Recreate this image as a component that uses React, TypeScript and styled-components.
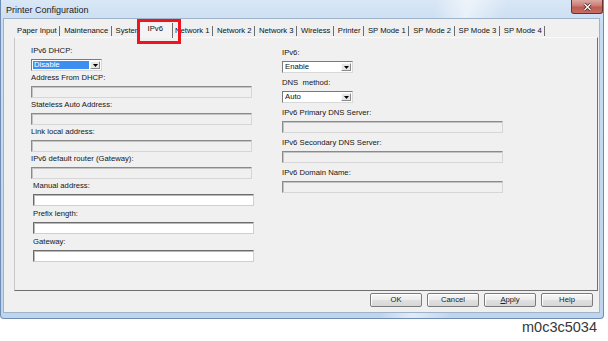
import * as React from 'react';
import styled, { createGlobalStyle } from 'styled-components'

const GlobalStyle = createGlobalStyle`
  html, body {
    margin: 0;
    padding: 0;
    background: #fff;
  }
  body {
    font-family: "Liberation Sans", Arial, sans-serif;
    color: #111;
  }
`

const Page = styled.div`
  width: 608px;
  height: 341px;
  display: flex;
  flex-direction: column;
  overflow: hidden;
`

const Window = styled.div`
  width: 604px;
  height: 319px;
  box-sizing: border-box;
  display: flex;
  flex-direction: column;
  padding: 0 3px 5px 2px;
  border: 1px solid #6f8db3;
  border-top: none;
  border-radius: 0 0 4px 4px;
  background:
    linear-gradient(100deg, rgba(255,255,255,0) 66%, rgba(255,255,255,0.55) 71%, rgba(255,255,255,0) 77%),
    linear-gradient(180deg, #d9e7f6 0%, #c8dcf1 8%, #bfd5ed 100%);
`

const TitleBar = styled.div`
  height: 18px;
  flex: none;
  display: flex;
  align-items: flex-start;
  justify-content: space-between;
  margin-right: -3px;
`

const TitleText = styled.span`
  font-size: 9px;
  line-height: 10px;
  padding: 5px 0 0 3px;
  color: #1b1b1b;
`

const CloseButton = styled.div`
  width: 32px;
  height: 14px;
  box-sizing: border-box;
  display: flex;
  align-items: center;
  justify-content: center;
  border: 1px solid #6b3029;
  border-top: none;
  border-radius: 0 0 3px 3px;
  background: linear-gradient(180deg, #dba9a3 0%, #cc7a71 45%, #bd5c53 55%, #c66d63 100%);
`

const Client = styled.div`
  flex: 1;
  display: flex;
  flex-direction: column;
  background: #f0f0f0;
  border: 1px solid #9fb3ca;
  padding: 0 1px 0 10px;
`

const TabStrip = styled.div`
  height: 18px;
  flex: none;
  display: flex;
  align-items: flex-end;
  margin-left: -1px;
  position: relative;
  z-index: 1;
`

const Tab = styled.div<{ $active?: boolean }>`
  position: relative;
  box-sizing: border-box;
  font-size: 7.7px;
  line-height: 10px;
  white-space: nowrap;
  color: #111;
  border-right: 1px solid #6e6e6e;
  height: ${p => (p.$active ? '15px' : '10px')};
  padding: ${p => (p.$active ? '1px 9px 0 8px' : '0 2.4px 0 4px')};
  margin: ${p => (p.$active ? '0 -2px -1px -5px' : '0 0 1px 0')};
  z-index: ${p => (p.$active ? 1 : 0)};
  background: ${p => (p.$active ? '#f4f4f4' : 'transparent')};
`

const Highlight = styled.div`
  position: absolute;
  left: -3px;
  top: -4px;
  width: 44px;
  height: 25px;
  box-sizing: border-box;
  border: 3px solid #f0141e;
  pointer-events: none;
`

const Panel = styled.div`
  flex: 1;
  display: grid;
  grid-template-columns: 251px 1fr;
  align-items: start;
  padding: 8px 0 0 16px;
  border: 1px solid;
  border-color: #fafafa #6f6f6f #6f6f6f #c8c8c8;
`

const Column = styled.div<{ $top: number; $gap: number }>`
  display: flex;
  flex-direction: column;
  gap: ${p => p.$gap}px;
  padding-top: ${p => p.$top}px;
`

const LowerGroup = styled.div`
  display: flex;
  flex-direction: column;
  gap: 3px;
  padding-left: 2px;
`

const Field = styled.div`
  display: flex;
  flex-direction: column;
  gap: 3px;
`

const FieldLabel = styled.span`
  font-size: 7.7px;
  line-height: 10px;
  height: 10px;
  white-space: pre;
  color: #151515;
`

const TextBox = styled.div<{ $disabled?: boolean }>`
  width: 221px;
  height: 12px;
  box-sizing: border-box;
  border: 1px solid;
  border-color: ${p => (p.$disabled ? '#8a8a8a #d6d6d6 #d6d6d6 #8a8a8a' : '#6d6d6d #cfcfcf #cfcfcf #6d6d6d')};
  box-shadow: inset 1px 1px 0 ${p => (p.$disabled ? '#c4c4c4' : '#b9b9b9')};
  background: ${p => (p.$disabled ? '#f0f0f0' : '#ffffff')};
`

const Combo = styled.div`
  width: 71px;
  height: 12px;
  box-sizing: border-box;
  display: flex;
  border: 1px solid;
  border-color: #7a7a7a #d8d8d8 #d8d8d8 #7a7a7a;
  background: #fff;
  padding: 1px;
`

const ComboValue = styled.span<{ $focused?: boolean }>`
  flex: 1;
  font-size: 7.7px;
  line-height: 8px;
  padding-left: 1px;
  background: ${p => (p.$focused ? '#3c8ff0' : 'transparent')};
  color: ${p => (p.$focused ? '#fff' : '#111')};
`

const ComboArrow = styled.span`
  width: 10px;
  flex: none;
  margin-left: 1px;
  display: flex;
  align-items: center;
  justify-content: center;
  box-sizing: border-box;
  border: 1px solid;
  border-color: #fafafa #8a8a8a #8a8a8a #fafafa;
  background: #e6e6e6;
`

const ButtonRow = styled.div`
  flex: none;
  display: flex;
  justify-content: flex-end;
  gap: 5px;
  margin: 2px 0 5px;
  padding-right: 5px;
`

const DialogButton = styled.button`
  width: 52px;
  height: 14px;
  padding: 0;
  box-sizing: border-box;
  font-family: "Liberation Sans", Arial, sans-serif;
  font-size: 7.7px;
  line-height: 10px;
  color: #222;
  border: 1px solid #7b7b7b;
  border-radius: 2px;
  background: linear-gradient(180deg, #f7f7f7 0%, #ececec 48%, #e0e0e0 52%, #d6d6d6 100%);
  box-shadow: inset 1px 1px 0 #ffffff;
`

const Caption = styled.div`
  width: 597px;
  text-align: right;
  font-family: "Liberation Sans", Arial, sans-serif;
  font-size: 14.5px;
  line-height: 16px;
  margin-top: 0px;
  color: #383838;
`

const tabs = [
  'Paper Input', 'Maintenance', 'System', 'IPv6', 'Network 1', 'Network 2', 'Network 3',
  'Wireless', 'Printer', 'SP Mode 1', 'SP Mode 2', 'SP Mode 3', 'SP Mode 4',
]

const Arrow = () => (
  <svg width="5" height="3" viewBox="0 0 5 3">
    <polygon points="0,0 5,0 2.5,3" fill="#000" />
  </svg>
)

const ComboBox = ({ value, focused }: { value: string; focused?: boolean }) => (
  <Combo>
    <ComboValue $focused={focused}>{value}</ComboValue>
    <ComboArrow><Arrow /></ComboArrow>
  </Combo>
)

interface FieldProps {
  label: string;
  select?: string;
  focused?: boolean;
  disabled?: boolean;
}

const FormField = (props: FieldProps) => (
  <Field>
    <FieldLabel>{props.label}</FieldLabel>
    {props.select ? <ComboBox value={props.select} focused={props.focused} /> : <TextBox $disabled={props.disabled} />}
  </Field>
)

const leftFields: FieldProps[] = [
  { label: 'IPv6 DHCP:', select: 'Disable', focused: true },
  { label: 'Address From DHCP:', disabled: true },
  { label: 'Stateless Auto Address:', disabled: true },
  { label: 'Link local address:', disabled: true },
  { label: 'IPv6 default router (Gateway):', disabled: true },
]

const manualFields: FieldProps[] = [
  { label: 'Manual address:' },
  { label: 'Prefix length:' },
  { label: 'Gateway:' },
]

const rightFields: FieldProps[] = [
  { label: 'IPv6:', select: 'Enable' },
  { label: 'DNS  method:', select: 'Auto' },
  { label: 'IPv6 Primary DNS Server:', disabled: true },
  { label: 'IPv6 Secondary DNS Server:', disabled: true },
  { label: 'IPv6 Domain Name:', disabled: true },
]

export default function App() {
  return (
    <Page>
      <GlobalStyle />
      <Window>
        <TitleBar>
          <TitleText>Printer Configuration</TitleText>
          <CloseButton>
            <svg width="9" height="8" viewBox="0 0 9 8">
              <path d="M1.5 1 L7.5 7 M7.5 1 L1.5 7" stroke="#4a2420" strokeWidth="3" />
              <path d="M1.5 1 L7.5 7 M7.5 1 L1.5 7" stroke="#fff" strokeWidth="1.4" />
            </svg>
          </CloseButton>
        </TitleBar>
        <Client>
          <TabStrip>
            {tabs.map(t => (
              <Tab key={t} $active={t === 'IPv6'}>
                {t}
                {t === 'IPv6' ? <Highlight /> : null}
              </Tab>
            ))}
          </TabStrip>
          <Panel>
            <Column $top={0} $gap={2}>
              {leftFields.map(f => <FormField key={f.label} {...f} />)}
              <LowerGroup>
                {manualFields.map(f => <FormField key={f.label} {...f} />)}
              </LowerGroup>
            </Column>
            <Column $top={2} $gap={5}>
              {rightFields.map(f => <FormField key={f.label} {...f} />)}
            </Column>
          </Panel>
          <ButtonRow>
            <DialogButton>OK</DialogButton>
            <DialogButton>Cancel</DialogButton>
            <DialogButton><u>A</u>pply</DialogButton>
            <DialogButton>Help</DialogButton>
          </ButtonRow>
        </Client>
      </Window>
      <Caption>m0c3c5034</Caption>
    </Page>
  )
}
